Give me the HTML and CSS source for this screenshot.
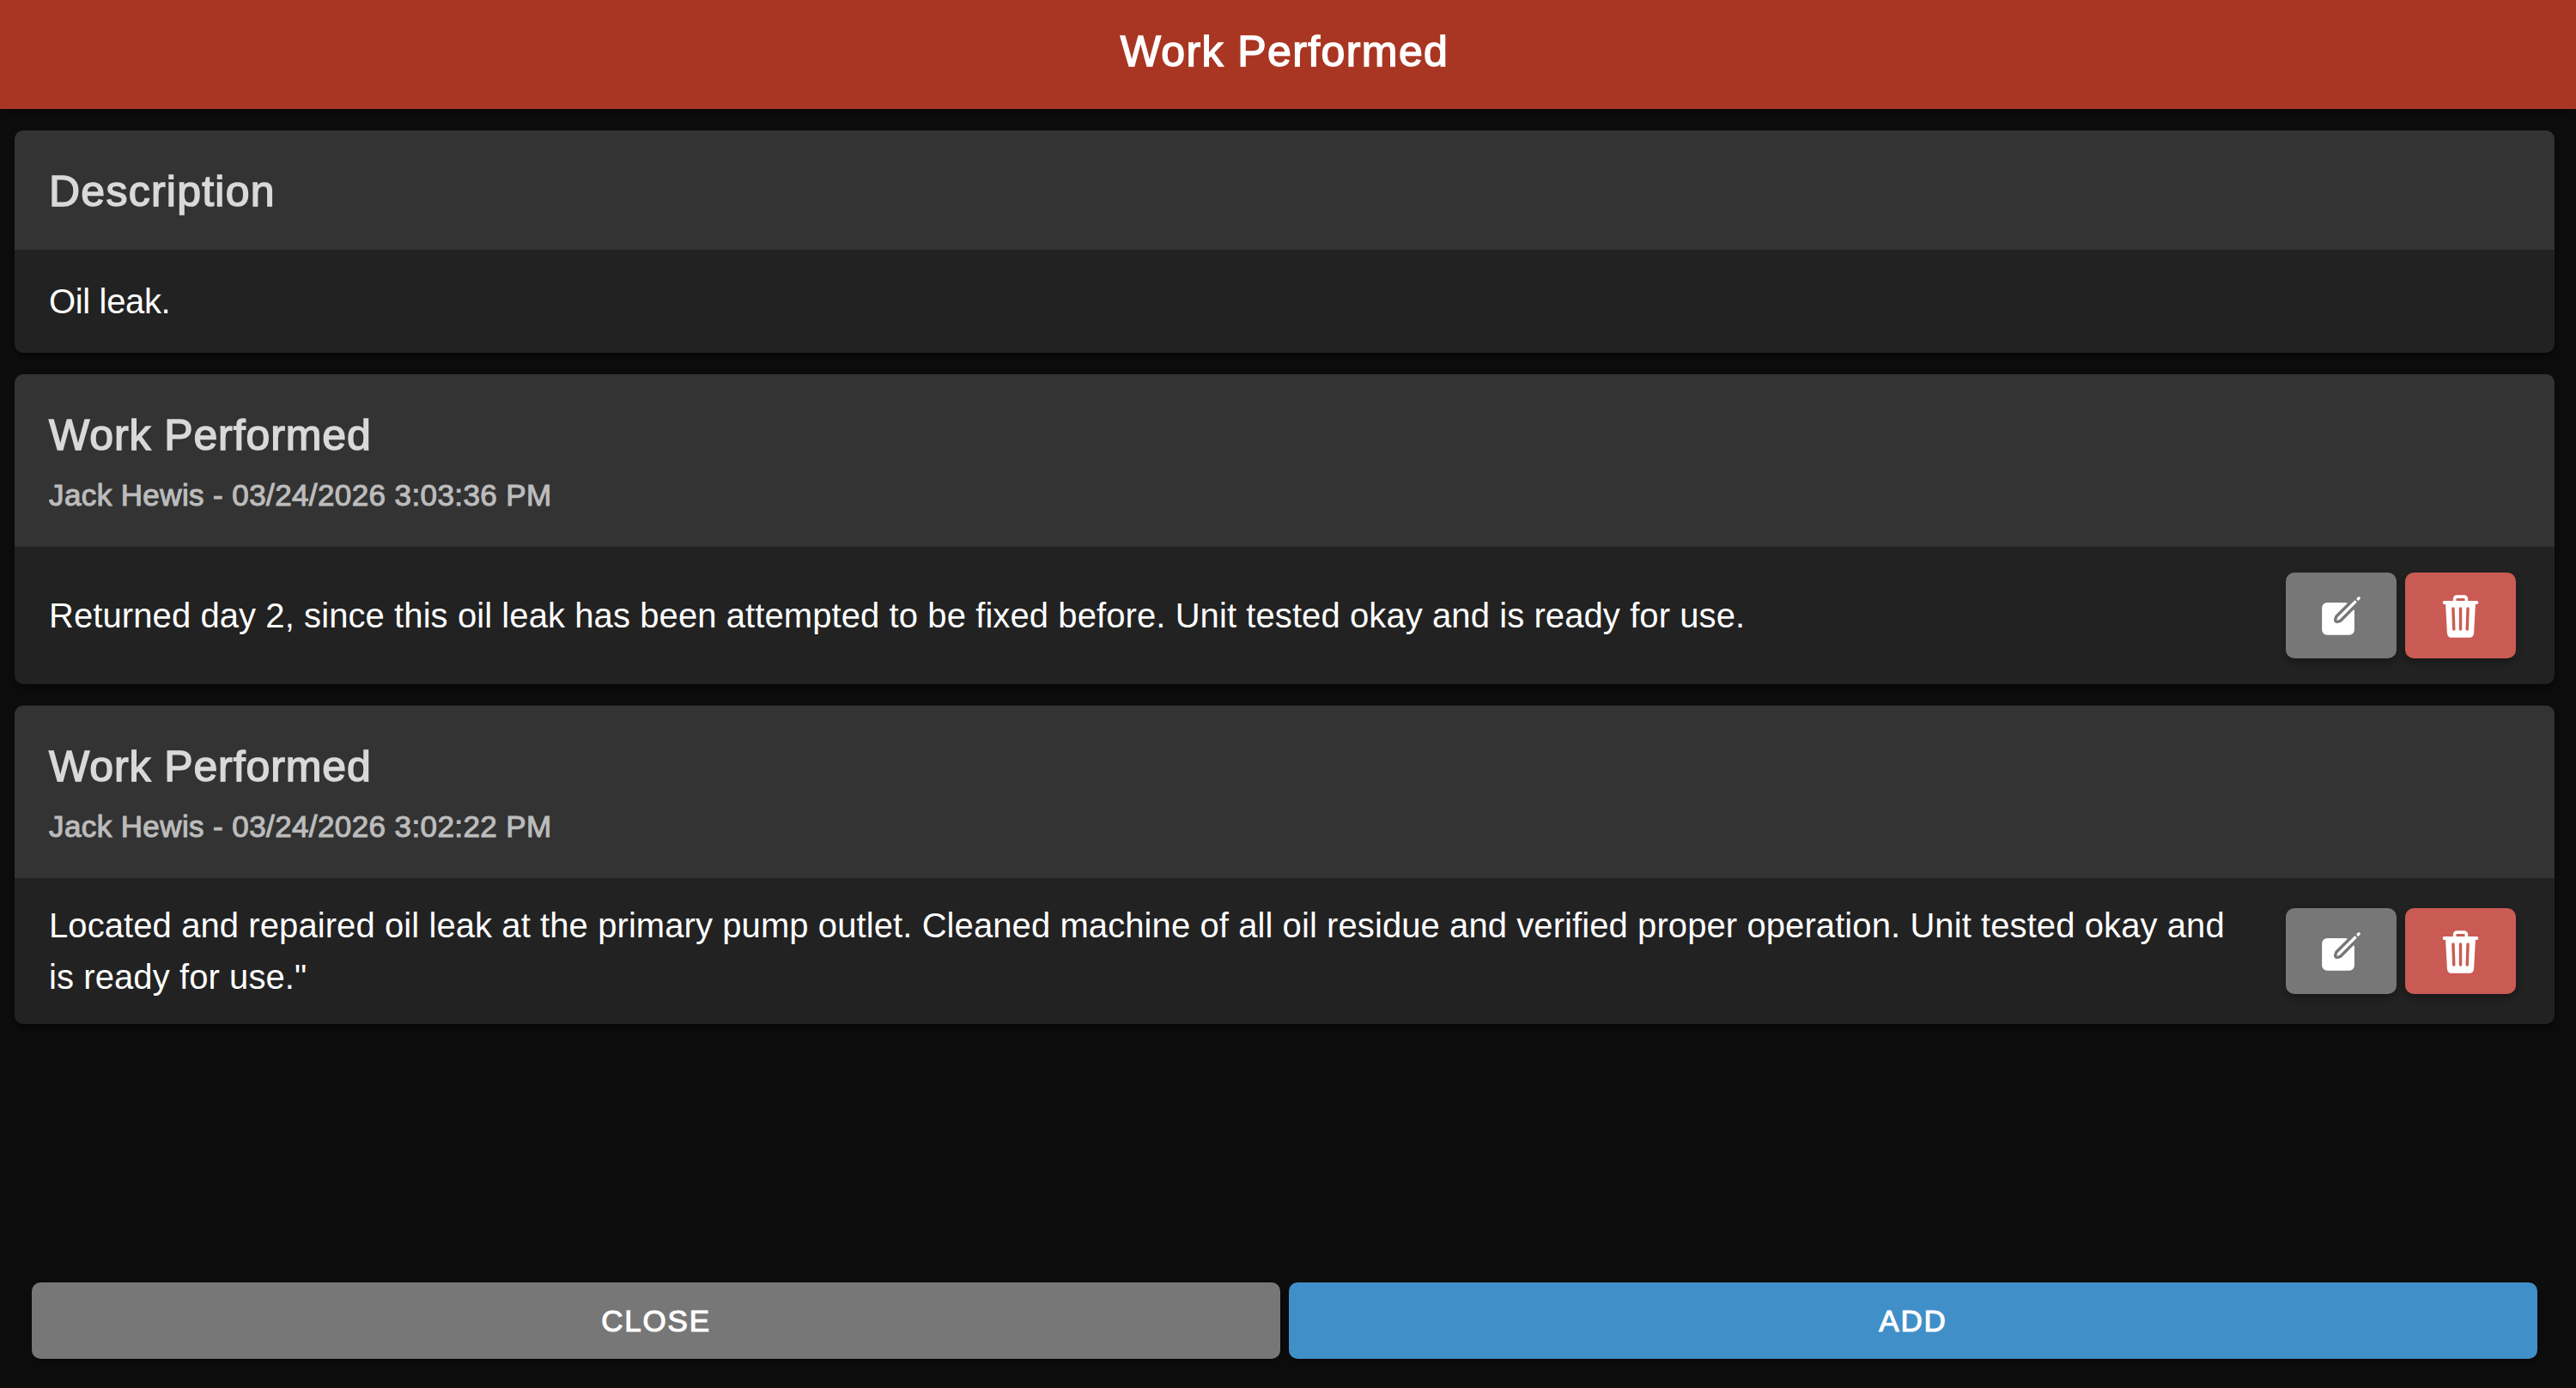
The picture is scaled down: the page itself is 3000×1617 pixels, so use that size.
FILE: index.html
```html
<!DOCTYPE html>
<html lang="en">
<head>
<meta charset="utf-8">
<title>Work Performed</title>
<link rel="stylesheet" href="styles.css">
</head>
<body>
<svg class="sprite" aria-hidden="true">
  <symbol id="icon-edit" viewBox="0 0 512 512">
    <path d="M459.94 53.25a16.06 16.06 0 00-23.22-.56L424.35 65a8 8 0 000 11.31l11.34 11.32a8 8 0 0011.34 0l12.06-12c6.1-6.09 6.67-16.01.85-22.38zM399.34 90L218.82 270.2a9 9 0 00-2.31 3.93L208.16 299a3.91 3.91 0 004.86 4.86l24.85-8.35a9 9 0 003.93-2.31L422 112.66a9 9 0 000-12.66l-9.95-10a9 9 0 00-12.71 0z"/>
    <path d="M386.34 193.66L264.45 315.79A41.08 41.08 0 01247.58 326l-25.9 8.67a35.92 35.92 0 01-44.33-44.33l8.67-25.9a41.08 41.08 0 0110.19-16.87L318.34 125.66A8 8 0 00312.69 112H104a56 56 0 00-56 56v240a56 56 0 0056 56h240a56 56 0 0056-56V199.31a8 8 0 00-13.66-5.65z"/>
  </symbol>
  <symbol id="icon-trash" viewBox="0 0 512 512">
    <path fill="none" stroke="currentColor" stroke-width="36" stroke-linecap="round" d="M80 112h352"/>
    <path fill="none" stroke="currentColor" stroke-width="34" stroke-linejoin="round" d="M192 112V72a23.93 23.93 0 0124-24h80a23.93 23.93 0 0124 24v40"/>
    <path fill-rule="evenodd" d="M93 112l18 332c2 28 20 48 48 48h194c28 0 46-20 48-48l18-332zM176 160a16 16 0 0116 15.400l8 224a16 16 0 01-32 1.200l-8-224a16 16 0 0116-16.600zM256 160a16 16 0 0116 16v224a16 16 0 01-32 0V176a16 16 0 0116-16zM336 160a16 16 0 0116 16.600l-8 224a16 16 0 01-32-1.200l8-224a16 16 0 0116-15.400z"/>
  </symbol>
</svg>
<div class="page">
  <header class="toolbar"><h1 class="toolbar-title"><span>Work Performed</span></h1></header>
  <main class="content">
    <section class="card">
      <div class="card-header"><h2 class="card-title summary-title"><span>Description</span></h2></div>
      <div class="card-body plain"><p class="card-text summary-text"><span>Oil leak.</span></p></div>
    </section>
    <section class="card">
      <div class="card-header">
        <h2 class="card-title"><span>Work Performed</span></h2>
        <h3 class="card-subtitle"><span>Jack Hewis - 03/24/2026 3:03:36 PM</span></h3>
      </div>
      <div class="card-body">
        <p class="card-text"><span>Returned day 2, since this oil leak has been attempted to be fixed before. Unit tested okay and is ready for use.</span></p>
        <div class="actions">
          <button class="button icon-button medium" aria-label="Edit"><svg class="icon"><use href="#icon-edit"/></svg></button>
          <button class="button icon-button danger" aria-label="Delete"><svg class="icon"><use href="#icon-trash"/></svg></button>
        </div>
      </div>
    </section>
    <section class="card">
      <div class="card-header">
        <h2 class="card-title"><span>Work Performed</span></h2>
        <h3 class="card-subtitle"><span>Jack Hewis - 03/24/2026 3:02:22 PM</span></h3>
      </div>
      <div class="card-body">
        <p class="card-text"><span>Located and repaired oil leak at the primary pump outlet. Cleaned machine of all oil residue and verified proper operation. Unit tested okay and is ready for use."</span></p>
        <div class="actions">
          <button class="button icon-button medium" aria-label="Edit"><svg class="icon"><use href="#icon-edit"/></svg></button>
          <button class="button icon-button danger" aria-label="Delete"><svg class="icon"><use href="#icon-trash"/></svg></button>
        </div>
      </div>
    </section>
  </main>
  <footer class="footer">
    <button class="button wide-button medium"><span>CLOSE</span></button>
    <button class="button wide-button primary"><span>ADD</span></button>
  </footer>
</div>
</body>
</html>
```

FILE: styles.css
```css
* { box-sizing: border-box; }

body {
  margin: 0;
  background: #0d0d0d;
  color: #fff;
  font-family: "Liberation Sans", Arial, sans-serif;
}

.sprite { display: none; }

.page {
  display: flex;
  flex-direction: column;
  height: 100vh;
  overflow: hidden;
}

h1, h2, h3, p { margin: 0; font-weight: 400; }

.toolbar {
  flex: none;
  height: 127px;
  padding-top: 30px;
  background: #a93622;
  box-shadow: 0 5px 12px rgba(0, 0, 0, .4);
  text-align: center;
}

.toolbar-title {
  padding-right: 8px;
  font-size: 50px;
  line-height: 60px;
  letter-spacing: 1.4px;
  -webkit-text-stroke: 1.5px currentColor;
}

.content {
  flex: 1;
  display: flex;
  flex-direction: column;
  gap: 25px;
  padding: 25px 25px 0 17px;
}

.card {
  border-radius: 10px;
  overflow: hidden;
  background: #222;
  box-shadow: 0 5px 10px rgba(0, 0, 0, .5);
}

.card-header {
  padding: 41px 40px 38px;
  background: #333;
}

.card-title {
  color: #d9d9d9;
  font-size: 50px;
  line-height: 60px;
  letter-spacing: .9px;
  -webkit-text-stroke: 1.5px currentColor;
}

.card-title.summary-title { letter-spacing: 1.25px; }

.card-subtitle {
  margin-top: 19px;
  padding-bottom: 1px;
  color: #bcbcbc;
  font-size: 35px;
  line-height: 42px;
  letter-spacing: .4px;
  -webkit-text-stroke: 1.1px currentColor;
}

.card-body {
  display: flex;
  align-items: center;
  min-height: 160px;
  padding: 25px 45px 24.5px 40px;
}

.card-body.plain { min-height: 120px; }

.card-text {
  flex: 1;
  font-size: 40px;
  line-height: 60px;
  letter-spacing: .085px;
}

.card-text.summary-text { letter-spacing: -.35px; }

.actions {
  flex: none;
  display: flex;
  gap: 10px;
  margin-left: 55px;
}

.button {
  display: flex;
  align-items: center;
  justify-content: center;
  padding: 0;
  border: 0;
  border-radius: 10px;
  color: #fff;
  font: 400 35px/42px "Liberation Sans", Arial, sans-serif;
  box-shadow: 0 5px 10px rgba(0, 0, 0, .3);
}

.icon-button { width: 129px; height: 100px; }

.icon { width: 55px; height: 55px; fill: currentColor; }

.medium { background: #777; }
.danger { background: #ca5b54; }
.primary { background: #418fc9; }

.footer {
  flex: none;
  display: flex;
  gap: 10px;
  padding: 0 45px 34px 37px;
}

.wide-button {
  flex: 1;
  height: 89px;
  letter-spacing: 1.8px;
  -webkit-text-stroke: 1.1px currentColor;
}
```
